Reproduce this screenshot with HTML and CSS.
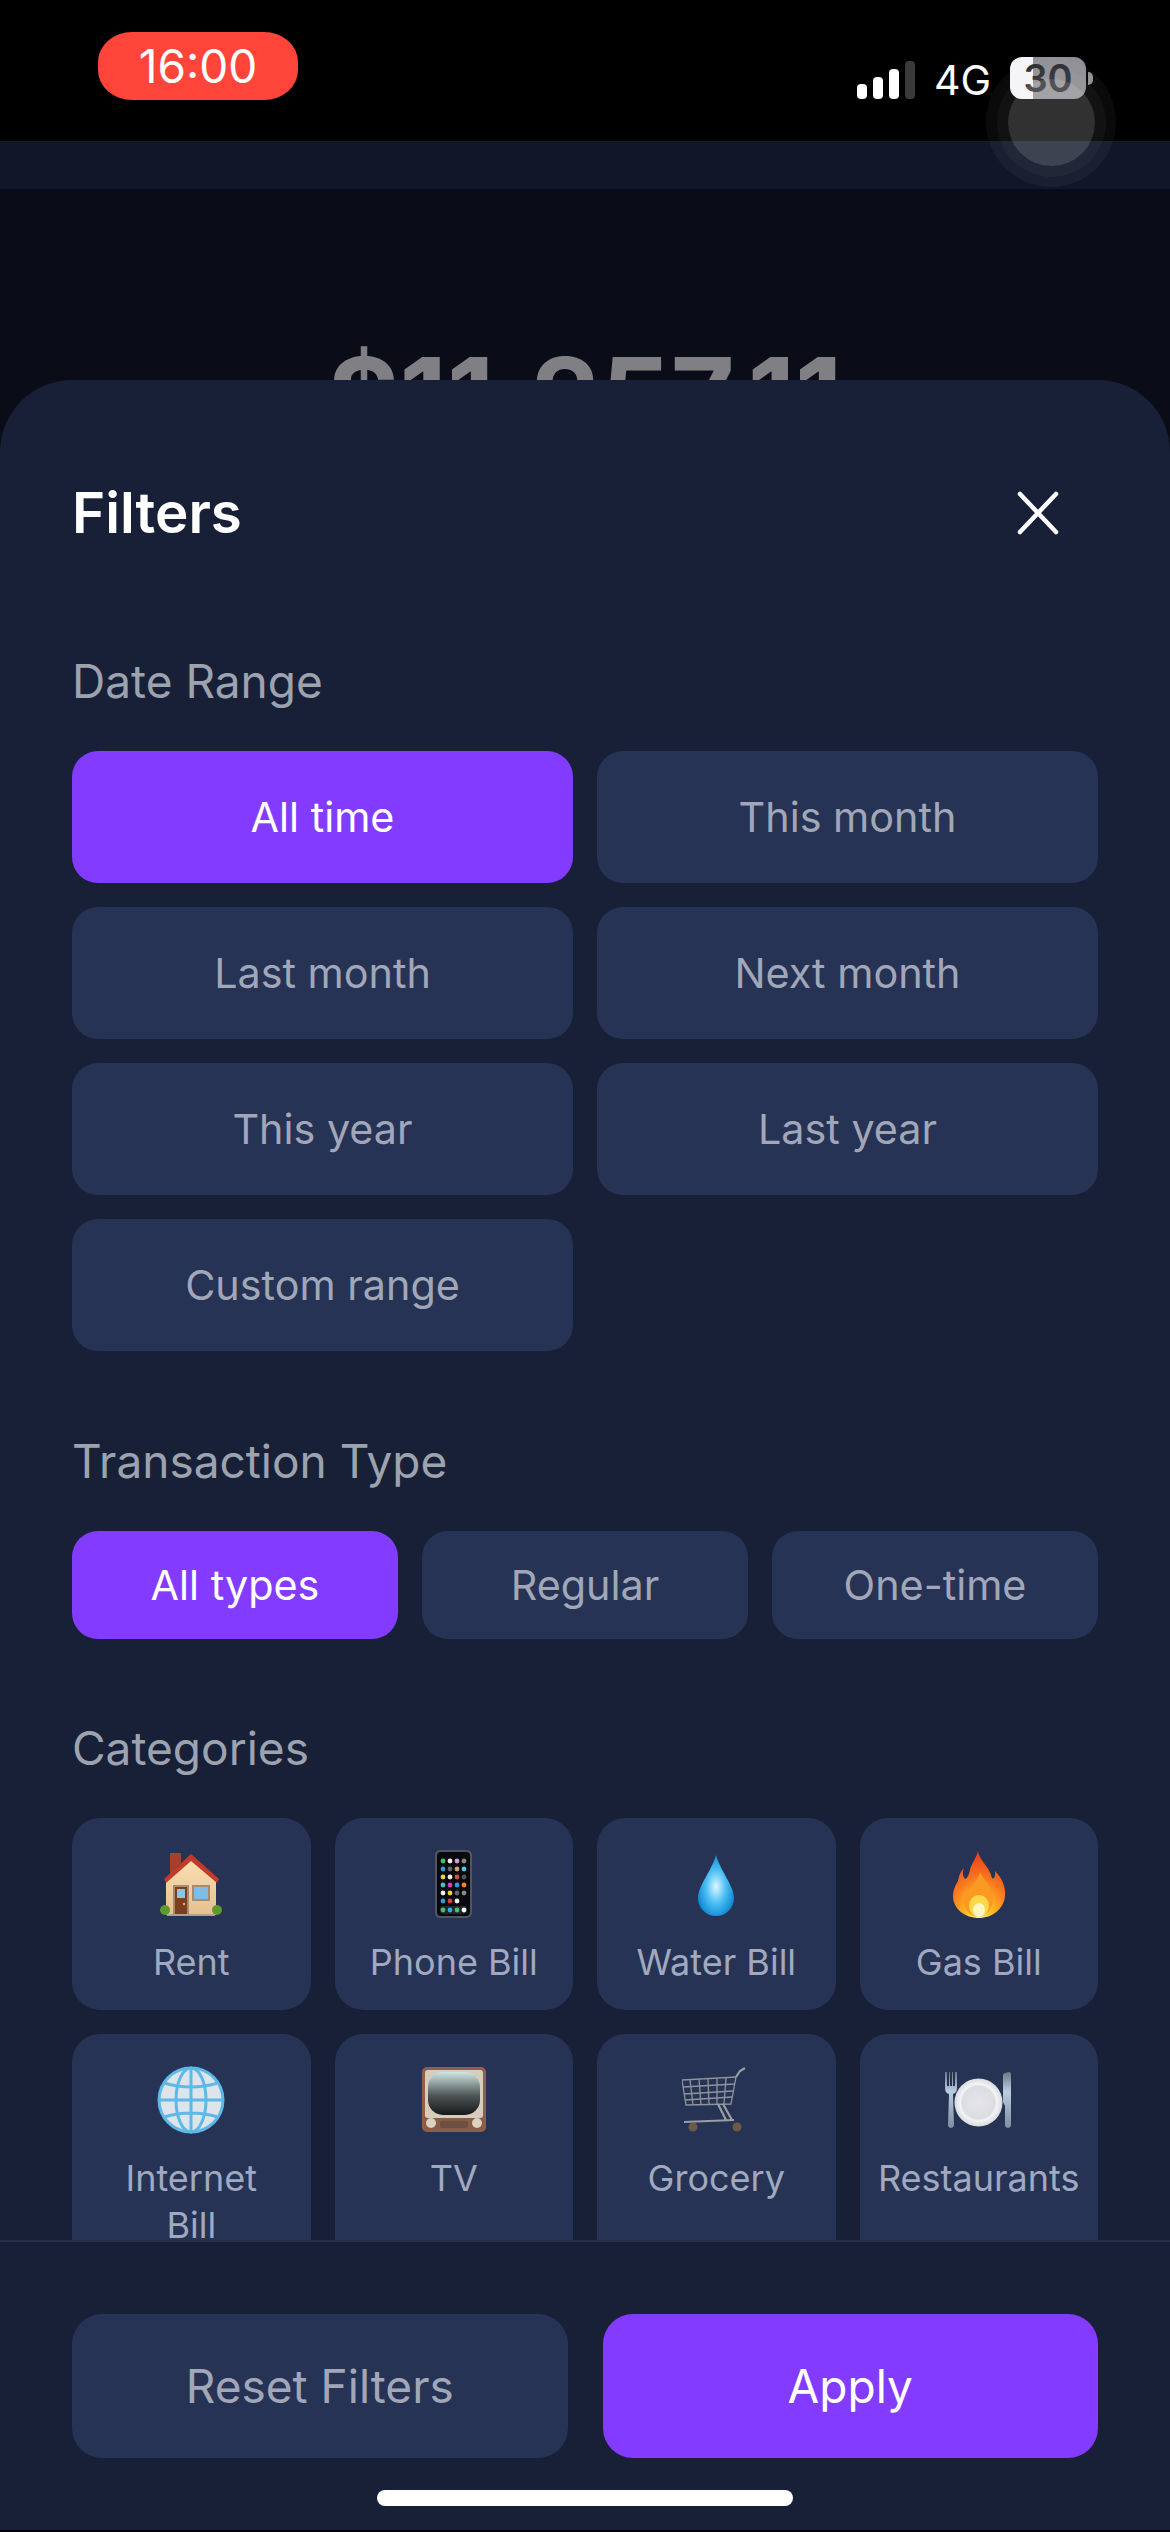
FILE: index.html
```html
<!DOCTYPE html>
<html lang="en">
<head>
  <meta charset="UTF-8" />
  <meta name="viewport" content="width=device-width, initial-scale=1.0"/>
  <title>Filters</title>
  <link rel="stylesheet" href="styles.css">
</head>
<body>
  <div class="status-bar">
    <div class="time-pill">16:00</div>
    <div class="status-right">
      <div class="signal">
        <span class="bar bar-1"></span>
        <span class="bar bar-2"></span>
        <span class="bar bar-3"></span>
        <span class="bar bar-4"></span>
      </div>
      <span class="network">4G</span>
      <div class="battery"><span>30</span></div>
      <span class="battery-tip"></span>
    </div>
  </div>

  <div class="page">
    <div class="top-band"></div>
    <div class="balance">$11,257.11</div>
  </div>

  <!-- floating assistive touch button -->
  <div class="touch-button"><span></span></div>

  <div class="sheet">
    <div class="sheet-scroll">
      <div class="sheet-header">
        <h2>Filters</h2>
        <svg class="close" width="48" height="48" viewBox="0 0 48 48">
          <path d="M6 5 L42 43 M42 5 L6 43" stroke="#fff" stroke-width="4.5" stroke-linecap="round" fill="none"/>
        </svg>
      </div>

      <h3>Date Range</h3>
      <div class="date-grid">
        <button class="opt active">All time</button>
        <button class="opt">This month</button>
        <button class="opt">Last month</button>
        <button class="opt">Next month</button>
        <button class="opt">This year</button>
        <button class="opt">Last year</button>
        <button class="opt">Custom range</button>
      </div>

      <h3>Transaction Type</h3>
      <div class="type-grid">
        <button class="opt active">All types</button>
        <button class="opt">Regular</button>
        <button class="opt">One-time</button>
      </div>

      <h3>Categories</h3>
      <div class="cat-grid">
        <div class="cat">
          <svg class="cat-icon" width="68" height="68" viewBox="0 0 68 68">
            <defs>
              <linearGradient id="wall" x1="0" y1="0" x2="0" y2="1"><stop offset="0" stop-color="#fbe0b4"/><stop offset="1" stop-color="#e6c090"/></linearGradient>
            </defs>
            <path d="M13 3h11v10l-11 11z" fill="#a5402f"/>
            <path d="M9 30 L34 8 L59 30 V65 H9z" fill="url(#wall)"/>
            <path d="M7 29 L34 4 L62 29 L60 33 L34 11 L9 33z" fill="#c23b2a"/>
            <rect x="16" y="35" width="16" height="29" fill="#a98a6c"/>
            <rect x="18" y="37" width="12" height="27" fill="#7a3f22"/>
            <rect x="20" y="39" width="8" height="9" fill="#8cc4e6"/>
            <circle cx="27" cy="54" r="1.2" fill="#e9b04c"/>
            <rect x="35" y="35" width="18" height="16" fill="#a98a6c"/>
            <rect x="37" y="37" width="14" height="12" fill="#7fbde6"/>
            <circle cx="8" cy="60" r="5" fill="#5f9a2e"/>
            <circle cx="60" cy="60" r="5" fill="#5f9a2e"/>
            <rect x="10" y="64" width="48" height="2" fill="#b69f84"/>
          </svg>
          <span>Rent</span>
        </div>
        <div class="cat">
          <svg class="cat-icon" width="68" height="68" viewBox="0 0 68 68">
            <rect x="15" y="0" width="37" height="68" rx="5" fill="#4f5561"/>
            <rect x="17" y="2" width="33" height="64" rx="4" fill="#08090c"/>
            <g>
              <circle cx="23" cy="11" r="2.4" fill="#3fc46b"/><circle cx="30" cy="11" r="2.4" fill="#eee"/><circle cx="37" cy="11" r="2.4" fill="#d59ad8"/><circle cx="44" cy="11" r="2.4" fill="#888"/>
              <circle cx="23" cy="19" r="2.4" fill="#2a9fe0"/><circle cx="30" cy="19" r="2.4" fill="#666"/><circle cx="37" cy="19" r="2.4" fill="#c8a878"/><circle cx="44" cy="19" r="2.4" fill="#52c5e0"/>
              <circle cx="23" cy="27" r="2.4" fill="#f0d040"/><circle cx="30" cy="27" r="2.4" fill="#eee"/><circle cx="37" cy="27" r="2.4" fill="#d9503f"/><circle cx="44" cy="27" r="2.4" fill="#555"/>
              <circle cx="23" cy="35" r="2.4" fill="#3cc6c0"/><circle cx="30" cy="35" r="2.4" fill="#d040c0"/><circle cx="37" cy="35" r="2.4" fill="#2a9fe0"/><circle cx="44" cy="35" r="2.4" fill="#f08a20"/>
              <circle cx="23" cy="43" r="2.4" fill="#eee"/><circle cx="30" cy="43" r="2.4" fill="#f0d040"/><circle cx="37" cy="43" r="2.4" fill="#666"/><circle cx="44" cy="43" r="2.4" fill="#888"/>
              <circle cx="23" cy="51" r="2.4" fill="#2a9fe0"/><circle cx="30" cy="51" r="2.4" fill="#d9403f"/><circle cx="37" cy="51" r="2.4" fill="#eee"/>
              <rect x="20" y="56" width="27" height="8" rx="3" fill="#23262c"/>
              <circle cx="23" cy="60" r="2.4" fill="#3fc46b"/><circle cx="30" cy="60" r="2.4" fill="#2ab0e0"/><circle cx="37" cy="60" r="2.4" fill="#3fc46b"/><circle cx="44" cy="60" r="2.4" fill="#fff"/>
            </g>
          </svg>
          <span>Phone Bill</span>
        </div>
        <div class="cat">
          <svg class="cat-icon" width="68" height="68" viewBox="0 0 68 68">
            <defs>
              <radialGradient id="drop" cx="0.5" cy="0.52" r="0.55"><stop offset="0" stop-color="#dff6ff"/><stop offset="0.5" stop-color="#4cc0f4"/><stop offset="1" stop-color="#0b84d0"/></radialGradient>
            </defs>
            <path d="M34 5 C38 20 52 36 52 48 A18 18 0 0 1 16 48 C16 36 30 20 34 5z" fill="url(#drop)"/>
          </svg>
          <span>Water Bill</span>
        </div>
        <div class="cat">
          <svg class="cat-icon" width="68" height="68" viewBox="0 0 68 68">
            <defs>
              <radialGradient id="flame" cx="0.5" cy="0.95" r="0.95"><stop offset="0" stop-color="#fff6b0"/><stop offset="0.25" stop-color="#ffc021"/><stop offset="0.6" stop-color="#f9741f"/><stop offset="1" stop-color="#e5391c"/></radialGradient>
            </defs>
            <path d="M33 1 C34 10 44 16 47 28 C49 30 51 26 50 21 C57 28 61 37 60 46 C59 59 47 68 34 68 C20 68 8 59 8 46 C8 40 10 36 13 31 C14 26 15 22 19 18 C17 23 18 26 20 29 C23 28 24 24 25 20 C26 14 31 9 33 1z" fill="url(#flame)"/>
            <path d="M35 22 C38 30 48 36 48 48 C48 60 40 67 34 67 C26 67 18 60 19 49 C20 42 24 42 27 36 C29 32 33 30 35 22z" fill="#fb9a22"/>
            <ellipse cx="34" cy="56" rx="10" ry="11" fill="#ffd84a"/>
            <ellipse cx="34" cy="60" rx="6" ry="7" fill="#fff6c0"/>
          </svg>
          <span>Gas Bill</span>
        </div>
        <div class="cat">
          <svg class="cat-icon" width="68" height="68" viewBox="0 0 68 68">
            <circle cx="34" cy="34" r="32" fill="#dfe3ea"/>
            <g fill="none" stroke="#5cb9e8" stroke-width="3">
              <circle cx="34" cy="34" r="32"/>
              <ellipse cx="34" cy="34" rx="15" ry="32"/>
              <path d="M34 2V66M2 34H66M7 17Q34 25 61 17M7 51Q34 43 61 51"/>
            </g>
          </svg>
          <span>Internet Bill</span>
        </div>
        <div class="cat">
          <svg class="cat-icon" width="68" height="68" viewBox="0 0 68 68">
            <defs>
              <linearGradient id="screen" x1="0" y1="0" x2="0" y2="1"><stop offset="0" stop-color="#cfe6e3"/><stop offset="0.55" stop-color="#4d5556"/><stop offset="1" stop-color="#16191a"/></linearGradient>
            </defs>
            <rect x="2" y="1" width="64" height="65" rx="5" fill="#8f5f4a"/>
            <rect x="5" y="4" width="58" height="48" rx="3" fill="#d8cdbd"/>
            <rect x="8" y="6" width="52" height="43" rx="15" fill="url(#screen)"/>
            <rect x="4" y="52" width="60" height="12" fill="#8a5c46"/>
            <circle cx="11" cy="57" r="5" fill="#d9d2bf"/>
            <circle cx="57" cy="57" r="5" fill="#d9d2bf"/>
            <rect x="20" y="55" width="28" height="7" rx="2" fill="#6c5042"/>
          </svg>
          <span>TV</span>
        </div>
        <div class="cat">
          <svg class="cat-icon" width="68" height="68" viewBox="0 0 68 68">
            <g fill="none" stroke="#8f939b" stroke-width="1.3">
              <path d="M0 14 L54 11 L49 38 L4 39z"/>
              <path d="M1 21 L53 18 M2 28 L51 25 M3 34 L50 31"/>
              <path d="M8 14 L11 39 M17 13 L19 39 M26 13 L27 39 M35 12 L35 38 M44 12 L42 38"/>
            </g>
            <g fill="none" stroke="#9a9ea6" stroke-width="2.2">
              <path d="M54 11 L58 5 L63 2"/>
              <path d="M36 38 L44 54 M41 38 L50 54 M2 56 L52 54"/>
            </g>
            <circle cx="11" cy="61" r="4.5" fill="#6b5a48"/>
            <circle cx="55" cy="61" r="4.5" fill="#6b5a48"/>
          </svg>
          <span>Grocery</span>
        </div>
        <div class="cat">
          <svg class="cat-icon" width="68" height="68" viewBox="0 0 68 68">
            <defs>
              <radialGradient id="plate" cx="0.5" cy="0.5" r="0.5"><stop offset="0" stop-color="#e6e6e9"/><stop offset="0.68" stop-color="#dcdde1"/><stop offset="0.76" stop-color="#f4f4f6"/><stop offset="1" stop-color="#d8dade"/></radialGradient>
              <linearGradient id="metal" x1="0" y1="0" x2="0" y2="1"><stop offset="0" stop-color="#6d7686"/><stop offset="0.35" stop-color="#b9cde0"/><stop offset="1" stop-color="#7f8da0"/></linearGradient>
            </defs>
            <circle cx="33.5" cy="36.5" r="24" fill="url(#plate)"/>
            <path d="M0 6 H2 V20 H4 V6 H5 V20 H7 V6 H8 V20 H10 V6 H12 V22 Q12 27 8 28 L9 60 Q6 64 3 60 L4 28 Q0 27 0 22z" fill="url(#metal)"/>
            <path d="M58 8 Q66 4 66 8 V60 Q63 64 60 60 V40 L58 36z" fill="url(#metal)"/>
          </svg>
          <span>Restaurants</span>
        </div>
      </div>
    </div>

    <div class="sheet-footer">
      <div class="footer-btns">
        <button class="foot-btn">Reset Filters</button>
        <button class="foot-btn apply">Apply</button>
      </div>
      <div class="home-bar"></div>
    </div>
  </div>
</body>
</html>
```

FILE: styles.css
```css
* {
  box-sizing: border-box;
}

body {
  margin: 0;
  width: 1170px;
  height: 2532px;
  overflow: hidden;
  position: relative;
  background-color: #000;
  font-family: 'Inter', 'Liberation Sans', sans-serif;
  color: #fff;
}

/* status bar */
.status-bar {
  height: 141px;
  background-color: #000;
  display: flex;
  justify-content: space-between;
  align-items: flex-start;
  padding: 32px 77px 0 98px;
}

.time-pill {
  width: 200px;
  height: 68px;
  border-radius: 34px / 30px;
  background-color: #ff453a;
  font-size: 46px;
  line-height: 68px;
  text-align: center;
}

.status-right {
  display: flex;
  align-items: flex-end;
  padding-top: 25px;
}

.signal {
  display: flex;
  align-items: flex-end;
  gap: 6px;
  height: 38px;
}

.bar {
  width: 10px;
  border-radius: 4px;
  background-color: #fff;
}

.bar-1 { height: 15px; }
.bar-2 { height: 22px; }
.bar-3 { height: 30px; }
.bar-4 { height: 38px; background-color: #3a3a3c; }

.network {
  margin: 0 19px 0 19px;
  font-size: 41px;
  line-height: 38px;
}

.battery {
  width: 76px;
  height: 42px;
  border-radius: 12px;
  background: linear-gradient(to right, #f5f5f7 30%, #8e8e93 30%);
  color: #2a2a2c;
  font-size: 38px;
  font-weight: 600;
  line-height: 42px;
  text-align: center;
}

.battery-tip {
  width: 5px;
  height: 13px;
  margin: 0 0 14px 2px;
  border-radius: 0 6px 6px 0;
  background-color: #8e8e93;
}

/* page behind the sheet */
.page {
  height: 2389px;
  background-color: #0a0d17;
}

.top-band {
  height: 48px;
  background-color: #111729;
}

.balance {
  margin-top: 150px;
  color: #807f84;
  font-size: 110px;
  font-weight: 700;
  line-height: 116px;
  text-align: center;
}

.touch-button {
  position: absolute;
  left: 986px;
  top: 57px;
  width: 130px;
  height: 130px;
  border-radius: 50%;
  background-color: rgba(255, 255, 255, 0.04);
  display: flex;
  align-items: center;
  justify-content: center;
}

.touch-button span {
  width: 87px;
  height: 87px;
  border-radius: 50%;
  background-color: rgba(255, 255, 255, 0.16);
  box-shadow: 0 0 0 11px rgba(255, 255, 255, 0.035);
}

/* filter sheet */
.sheet {
  position: absolute;
  left: 0;
  top: 380px;
  width: 1170px;
  height: 2150px;
  display: flex;
  flex-direction: column;
  background-color: #182037;
  border-radius: 72px 72px 0 0;
}

.sheet-scroll {
  height: 1860px;
  padding: 101px 72px 0;
  overflow: hidden;
}

.sheet-header {
  display: flex;
  justify-content: space-between;
  align-items: center;
  height: 64px;
  margin-bottom: 109px;
}

h2 {
  margin: 0;
  font-size: 56.5px;
  font-weight: 600;
  line-height: 64px;
}

.close {
  margin-right: 36px;
}

h3 {
  margin: 0 0 43px;
  color: #9ca3af;
  font-size: 46px;
  font-weight: 400;
  line-height: 54px;
}

.date-grid,
.type-grid {
  display: grid;
  gap: 24px;
  margin-bottom: 82px;
}

.date-grid {
  grid-template-columns: 1fr 1fr;
  grid-auto-rows: 132px;
  margin-bottom: 83px;
}

.type-grid {
  grid-template-columns: 1fr 1fr 1fr;
  grid-auto-rows: 108px;
}

.opt {
  border: none;
  border-radius: 26px;
  background-color: #263354;
  color: #a1a7b8;
  font-family: inherit;
  font-size: 41.3px;
}

.opt.active {
  background-color: #833cff;
  color: #fff;
}

.cat-grid {
  display: grid;
  grid-template-columns: repeat(4, minmax(0, 1fr));
  gap: 24px;
}

.cat {
  display: flex;
  flex-direction: column;
  align-items: center;
  padding: 32px 28px 24px;
  border-radius: 28px;
  background-color: #263354;
  color: #a0a9c0;
  font-size: 36px;
  line-height: 47px;
  text-align: center;
}

.cat-icon {
  margin-bottom: 21px;
}

.sheet-footer {
  padding-top: 72px;
  border-top: 2px solid #262f4a;
}

.footer-btns {
  display: flex;
  gap: 35px;
  padding: 0 72px;
}

.foot-btn {
  flex: 1;
  height: 144px;
  border: none;
  border-radius: 30px;
  background-color: #263354;
  color: #a1a7b8;
  font-family: inherit;
  font-size: 46px;
}

.foot-btn.apply {
  background-color: #833cff;
  color: #fff;
}

.home-bar {
  width: 416px;
  height: 16px;
  margin: 32px auto 0;
  border-radius: 8px;
  background-color: #fff;
}
```
